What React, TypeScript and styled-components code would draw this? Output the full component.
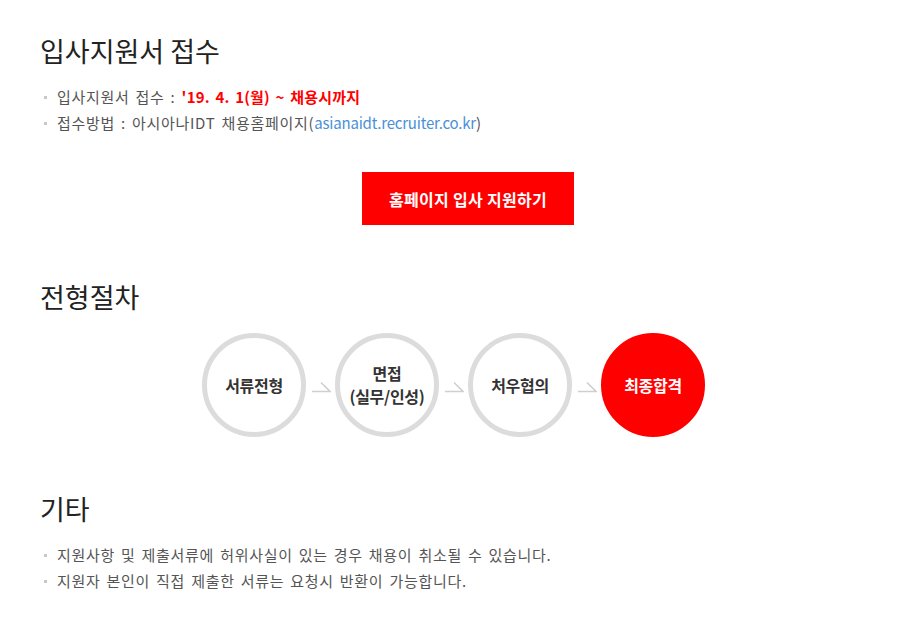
import React from "react";
import styled, { createGlobalStyle } from "styled-components";

const Global = createGlobalStyle`
  html, body { margin: 0; padding: 0; background: #fff; }
  body { font-family: "Noto Sans CJK KR", "Noto Sans", sans-serif; color: #555; }
  * { box-sizing: border-box; }
`;

const Page = styled.div`
  padding: 32px 16px 40px 40px;
  width: 912px;
`;

const Section = styled.section<{ $gap?: number }>`
  margin-top: ${(p) => p.$gap ?? 0}px;
`;

const Title = styled.h2`
  margin: 0;
  font-size: 27px;
  line-height: 38px;
  font-weight: 400;
  color: #222;
  letter-spacing: 0;
`;

const List = styled.ul`
  list-style: none;
  margin: 14px 0 0;
  padding: 0;
`;

const Item = styled.li`
  position: relative;
  padding-left: 17px;
  font-size: 15px;
  line-height: 26px;
  color: #555;
  letter-spacing: 0.7px;
  word-spacing: 2px;
  &::before {
    content: "";
    position: absolute;
    left: 4px;
    top: 12px;
    width: 3px;
    height: 3px;
    background: #c8c8c8;
  }
`;

const Strong = styled.strong`
  color: #f00;
  font-weight: 700;
  letter-spacing: 0.2px;
`;

const Link = styled.a`
  color: #4a8fd8;
  text-decoration: none;
  letter-spacing: -0.2px;
`;

const ButtonRow = styled.div`
  display: flex;
  justify-content: center;
  margin-top: 36px;
`;

const ApplyButton = styled.a`
  display: flex;
  align-items: center;
  justify-content: center;
  width: 212px;
  height: 53px;
  background: #f00;
  color: #fff;
  font-size: 16px;
  font-weight: 700;
  text-decoration: none;
  letter-spacing: 0.3px;
`;

const Steps = styled.ol`
  list-style: none;
  margin: 17px 0 0;
  padding: 0 29px 0 0;
  display: flex;
  justify-content: center;
  align-items: center;
`;

const Step = styled.li<{ $final?: boolean }>`
  width: 104px;
  height: 104px;
  border-radius: 50%;
  border: 5px solid ${(p) => (p.$final ? "#f00" : "#dcdcdc")};
  background: ${(p) => (p.$final ? "#f00" : "#fff")};
  color: ${(p) => (p.$final ? "#fff" : "#333")};
  display: flex;
  align-items: center;
  justify-content: center;
  text-align: center;
  font-size: 16px;
  line-height: 23px;
  font-weight: 700;
  letter-spacing: -0.3px;
`;

const ArrowBox = styled.li`
  width: 29px;
  display: flex;
  justify-content: center;
  align-items: center;
  padding-top: 4px;
`;

const Arrow = () => (
  <ArrowBox aria-hidden>
    <svg width="20" height="12" viewBox="0 0 20 12">
      <path d="M1 10.5 H19 L10 1.5" fill="none" stroke="#cfcfcf" strokeWidth="1.6" />
    </svg>
  </ArrowBox>
);

const steps: { label: React.ReactNode; final?: boolean }[] = [
  { label: "서류전형" },
  { label: (<>면접<br />(실무/인성)</>) },
  { label: "처우협의" },
  { label: "최종합격", final: true },
];

export default function App() {
  return (
    <>
      <Global />
      <Page>
        <Section>
          <Title>입사지원서 접수</Title>
          <List>
            <Item>
              입사지원서 접수 : <Strong>'19. 4. 1(월) ~ 채용시까지</Strong>
            </Item>
            <Item>
              접수방법 : 아시아나IDT 채용홈페이지(<Link href="#">asianaidt.recruiter.co.kr</Link>)
            </Item>
          </List>
          <ButtonRow>
            <ApplyButton href="#">홈페이지 입사 지원하기</ApplyButton>
          </ButtonRow>
        </Section>
        <Section $gap={53}>
          <Title>전형절차</Title>
          <Steps>
            {steps.map((s, i) => (
              <React.Fragment key={i}>
                {i > 0 && <Arrow />}
                <Step $final={s.final}>{s.label}</Step>
              </React.Fragment>
            ))}
          </Steps>
        </Section>
        <Section $gap={53}>
          <Title>기타</Title>
          <List>
            <Item>지원사항 및 제출서류에 허위사실이 있는 경우 채용이 취소될 수 있습니다.</Item>
            <Item>지원자 본인이 직접 제출한 서류는 요청시 반환이 가능합니다.</Item>
          </List>
        </Section>
      </Page>
    </>
  );
}
